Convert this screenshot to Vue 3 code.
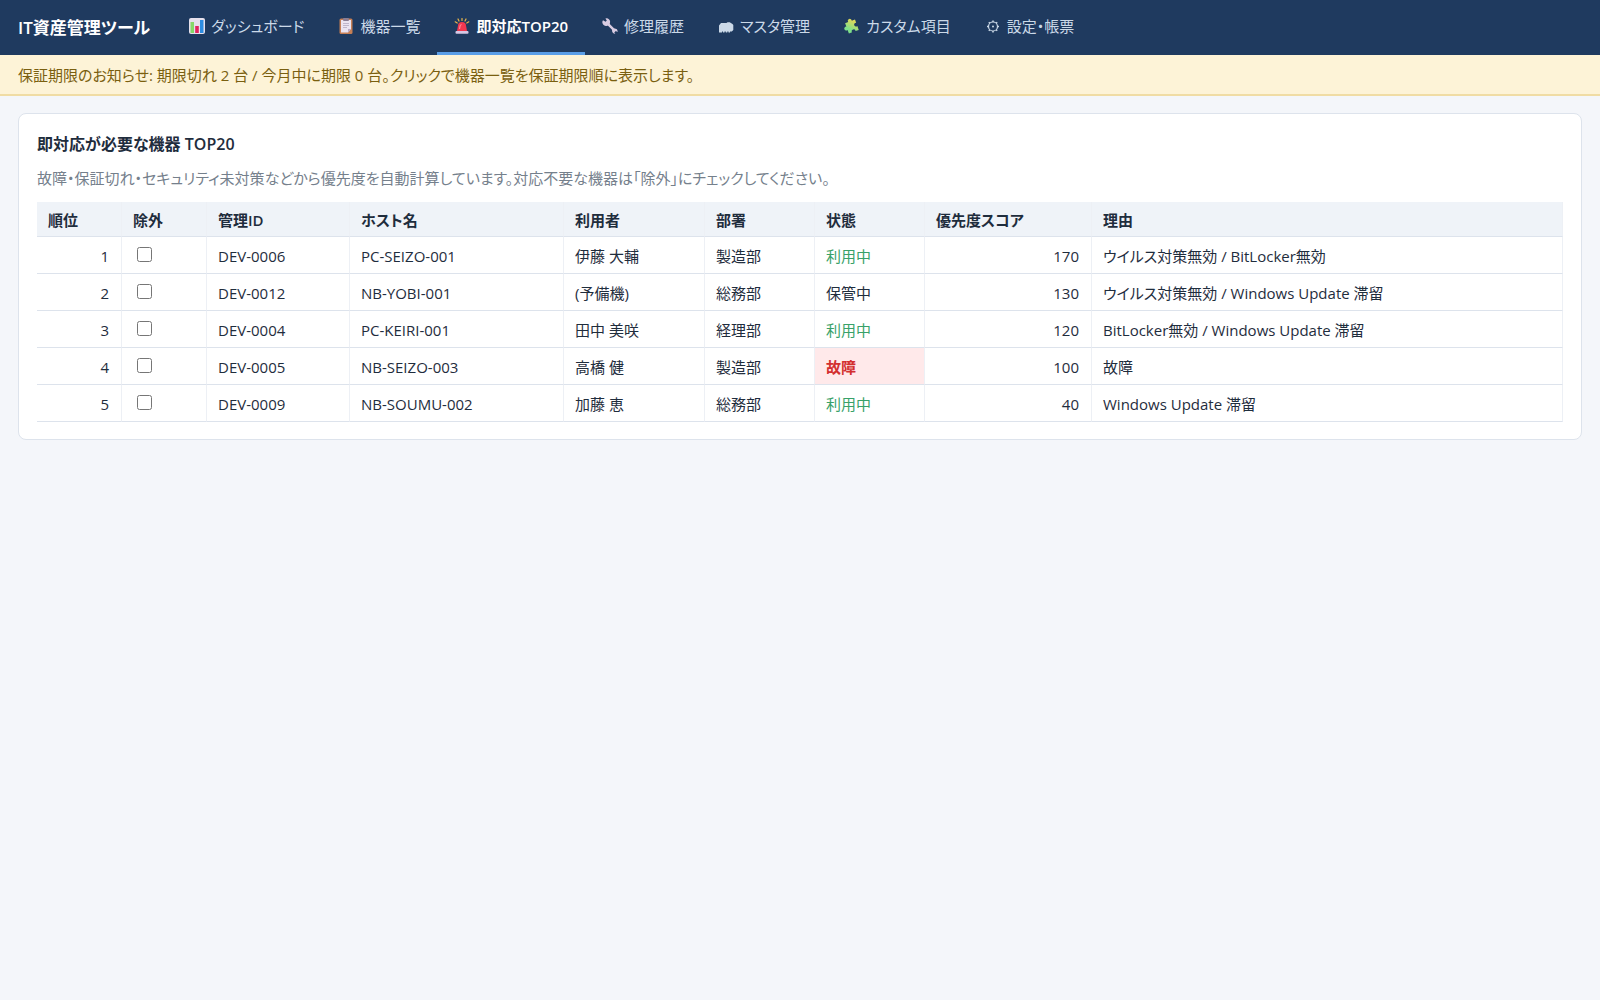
<script setup>
import { ref } from 'vue'

const tabs = [
    { id: 'dashboard', label: 'ダッシュボード' },
    { id: 'devices', label: '機器一覧' },
    { id: 'urgent', label: '即対応TOP20' },
    { id: 'repairs', label: '修理履歴' },
    { id: 'master', label: 'マスタ管理' },
    { id: 'custom', label: 'カスタム項目' },
    { id: 'settings', label: '設定・帳票' },
]
const current = ref('urgent')

const devices = ref([
    { id: 'DEV-0006', host: 'PC-SEIZO-001', user: '伊藤 大輔', dept: '製造部', status: '利用中', score: 170, reason: 'ウイルス対策無効 / BitLocker無効', excluded: false },
    { id: 'DEV-0012', host: 'NB-YOBI-001', user: '(予備機)', dept: '総務部', status: '保管中', score: 130, reason: 'ウイルス対策無効 / Windows Update 滞留', excluded: false },
    { id: 'DEV-0004', host: 'PC-KEIRI-001', user: '田中 美咲', dept: '経理部', status: '利用中', score: 120, reason: 'BitLocker無効 / Windows Update 滞留', excluded: false },
    { id: 'DEV-0005', host: 'NB-SEIZO-003', user: '高橋 健', dept: '製造部', status: '故障', score: 100, reason: '故障', excluded: false },
    { id: 'DEV-0009', host: 'NB-SOUMU-002', user: '加藤 恵', dept: '総務部', status: '利用中', score: 40, reason: 'Windows Update 滞留', excluded: false },
])

const statusClass = (status) => ({
    active: status === '利用中',
    broken: status === '故障',
})
</script>

<template>
    <div class="app">
        <header class="topbar">
            <h1>IT資産管理ツール</h1>
            <nav>
                <button
                    v-for="tab in tabs"
                    :key="tab.id"
                    type="button"
                    class="tab"
                    :class="{ current: current === tab.id }"
                    @click="current = tab.id"
                >
                    <svg class="icon" viewBox="0 0 16 16" aria-hidden="true">
                        <template v-if="tab.id === 'dashboard'">
                            <rect width="16" height="16" rx="2" fill="#e6e0ec" />
                            <rect x="1.5" y="4" width="3.5" height="11" fill="#86d968" />
                            <rect x="6.2" y="8" width="3.6" height="7" fill="#e0245e" />
                            <rect x="11" y="2" width="3.5" height="13" fill="#2d8ce0" />
                        </template>
                        <template v-else-if="tab.id === 'devices'">
                            <rect x="1.5" y="0.5" width="13" height="15.5" rx="1.5" fill="#c67f55" />
                            <path d="M3 2h10v9l-3 3.5H3z" fill="#ebe4f1" />
                            <path d="M13 11l-3 3.5V11z" fill="#b9a8c6" />
                            <rect x="5" y="0" width="6" height="3" rx="1" fill="#8b7d92" />
                            <path d="M5 5.5h6M5 7.5h6M5 9.5h4" stroke="#b5a9c2" stroke-width="0.8" />
                        </template>
                        <template v-else-if="tab.id === 'urgent'">
                            <path d="M8 .5v2M4 1l1 2M12 1l-1 2M1.2 3.8l2 1.2M14.8 3.8l-2 1.2" stroke="#e9b64b" stroke-width="1.2" stroke-linecap="round" />
                            <path d="M3 13l1-5.500a4 3.500 0 0 1 8 0L13 13z" fill="#f0384f" />
                            <path d="M5.500 11l.6-3a2 2 0 0 1 1.500-1.500" stroke="#ff8496" stroke-width="1.2" fill="none" />
                            <rect x="1.5" y="13" width="13" height="2.800" rx="1" fill="#d5c7e5" />
                        </template>
                        <template v-else-if="tab.id === 'repairs'">
                            <path d="M1 2.300l2.600 1.400 1.200-1.200L3.400.5a3.600 3.600 0 0 1 4.400 4.800l.2.900 4 4 .9.200a3 3 0 0 1 2.600 3.600l-1.700-1-1.500 1.500 1 1.300a3 3 0 0 1-3.200-3.500l-.3-.8L6 7.800 5.200 7.700A3.600 3.600 0 0 1 1 2.300z" fill="#d9cce2" />
                        </template>
                        <template v-else-if="tab.id === 'master'">
                            <path d="M1 14.500V7.500L3 5h5.500l1-.8h2.200L14.500 6l.8 1v5l-1.500 1.500H12v1h-1.500v-1H9.300v1H7.800v-1H6.500v1H5v-1H4v1z" fill="#cbd9e8" />
                        </template>
                        <template v-else-if="tab.id === 'custom'">
                            <defs>
                                <linearGradient id="puzzle" x1="0" y1="1" x2="1" y2="0">
                                    <stop offset="0.3" stop-color="#7ee08a" />
                                    <stop offset="0.8" stop-color="#dcd85c" />
                                </linearGradient>
                            </defs>
                            <!-- two knobs and two sockets, turned so that the corners reach out -->
                            <g transform="rotate(-20 8 8)">
                                <path d="M2.500 3h3.300a2 2 0 1 1 3.800 0h3.400v3.400a1.900 1.900 0 1 0 0 3.500V14H9.600a1.900 1.900 0 1 0-3.700 0H2.500v-3.700a2 2 0 1 1 0-3.700z" fill="url(#puzzle)" />
                            </g>
                        </template>
                        <template v-else>
                            <circle cx="8" cy="8.500" r="4.500" fill="none" stroke="#cbd9e8" stroke-width="1.200" />
                            <circle cx="8" cy="8.500" r="1" fill="#cbd9e8" />
                            <path d="M8 4V2.500M8 14.500V13M3.500 8.500H2M14 8.500h-1.500M4.800 5.300l-1-1M12.200 12.700l-1-1M4.800 11.700l-1 1M12.200 4.300l-1 1" stroke="#cbd9e8" stroke-width="1.500" />
                        </template>
                    </svg>
                    <span>{{ tab.label }}</span>
                </button>
            </nav>
        </header>

        <button type="button" class="notice" @click="current = 'devices'">
            保証期限のお知らせ: 期限切れ 2 台 / 今月中に期限 0 台。クリックで機器一覧を保証期限順に表示します。
        </button>

        <main>
            <section class="card">
                <h2>即対応が必要な機器 TOP20</h2>
                <p>故障・保証切れ・セキュリティ未対策などから優先度を自動計算しています。対応不要な機器は「除外」にチェックしてください。</p>
                <table>
                    <colgroup>
                        <col class="w-rank">
                        <col class="w-exclude">
                        <col class="w-id">
                        <col class="w-host">
                        <col class="w-user">
                        <col class="w-dept">
                        <col class="w-status">
                        <col class="w-score">
                        <col>
                    </colgroup>
                    <thead>
                        <tr>
                            <th>順位</th>
                            <th>除外</th>
                            <th>管理ID</th>
                            <th>ホスト名</th>
                            <th>利用者</th>
                            <th>部署</th>
                            <th>状態</th>
                            <th>優先度スコア</th>
                            <th>理由</th>
                        </tr>
                    </thead>
                    <tbody>
                        <tr v-for="(device, index) in devices" :key="device.id">
                            <td class="num">{{ index + 1 }}</td>
                            <td><input v-model="device.excluded" type="checkbox" :aria-label="device.id + ' を除外'"></td>
                            <td>{{ device.id }}</td>
                            <td>{{ device.host }}</td>
                            <td>{{ device.user }}</td>
                            <td>{{ device.dept }}</td>
                            <td :class="statusClass(device.status)">{{ device.status }}</td>
                            <td class="num">{{ device.score }}</td>
                            <td>{{ device.reason }}</td>
                        </tr>
                    </tbody>
                </table>
            </section>
        </main>
    </div>
</template>

<style>
body {
    background: #f4f6fa;
}
</style>

<style scoped>
.app {
    font-family: "Open Sans", "Noto Sans CJK JP", sans-serif;
    font-size: 15px;
    line-height: 22px;
    font-feature-settings: "palt";
    color: #1f2d3d;
}

button {
    font: inherit;
    font-feature-settings: inherit;
    border: 0;
    cursor: pointer;
}

.topbar {
    display: flex;
    align-items: stretch;
    gap: 22px;
    height: 55px;
    padding: 0 18px;
    background: #1f3a5f;
}

h1 {
    display: flex;
    align-items: center;
    margin: 0;
    font-size: 17px;
    font-weight: 600;
    color: #fff;
    white-space: nowrap;
}

nav {
    display: flex;
}

.tab {
    display: flex;
    align-items: center;
    gap: 6px;
    padding: 0 17px;
    border-bottom: 3px solid transparent;
    background: none;
    color: #cbd9e8;
    white-space: nowrap;
}

.tab.current {
    border-bottom-color: #5a9ee8;
    color: #fff;
    font-weight: 600;
}

.icon {
    width: 16px;
    height: 16px;
}

.notice {
    display: block;
    width: 100%;
    padding: 9px 18px 8px;
    border-bottom: 2px solid #f0dca4;
    background: #fdf3d7;
    color: #7a5f10;
    text-align: left;
}

main {
    padding: 17px 18px;
}

.card {
    padding: 19px 18px 17px;
    border: 1px solid #dde3ec;
    border-radius: 8px;
    background: #fff;
}

h2 {
    margin: 0 0 12px;
    font-size: 16px;
    line-height: 22px;
    font-weight: 600;
}

p {
    margin: 0 0 13px;
    color: #75808c;
}

table {
    width: 100%;
    table-layout: fixed;
    border-collapse: separate;
    border-spacing: 0;
}

th,
td {
    height: 35px;
    padding: 1px 12px 0 11px;
    border-right: 1px solid #edf0f5;
    border-bottom: 1px solid #dde3ec;
    text-align: left;
}

th {
    height: 33px;
    background: #eff3f8;
    font-weight: 600;
}

.num {
    text-align: right;
}

.active {
    color: #38a169;
}

.broken {
    background: #ffe9ea;
    color: #d32f2f;
    font-weight: 600;
}

input {
    display: block;
    width: 15px;
    height: 15px;
    margin: 0 4px 2px;
}

.w-rank,
.w-exclude {
    width: 85px;
}

.w-id {
    width: 143px;
}

.w-host {
    width: 214px;
}

.w-user {
    width: 141px;
}

.w-dept,
.w-status {
    width: 110px;
}

.w-score {
    width: 167px;
}
</style>
